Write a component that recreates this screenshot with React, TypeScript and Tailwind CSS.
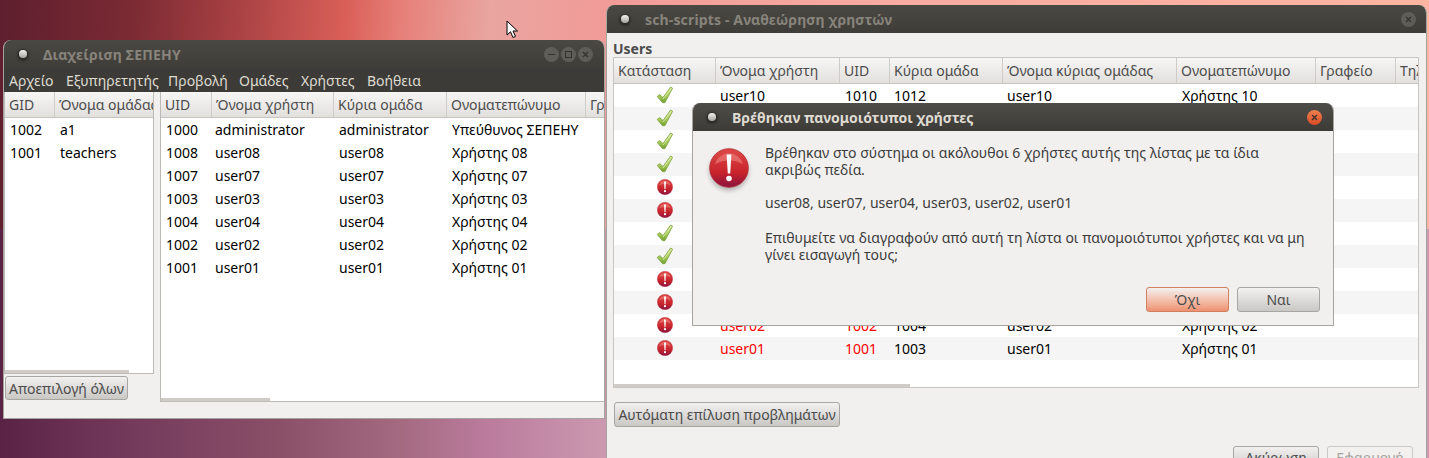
import React from "react";

const font = "font-['Noto_Sans','Open_Sans',sans-serif]";

function Check() {
  return (
    <svg width="18" height="18" viewBox="0 0 18 18">
      <defs>
        <linearGradient id="chk" x1="0" y1="0" x2="0" y2="1">
          <stop offset="0" stopColor="#dcec9a" />
          <stop offset="0.6" stopColor="#a5c959" />
          <stop offset="1" stopColor="#6f9e2e" />
        </linearGradient>
      </defs>
      <path d="M1.2 10.4 L3.8 8.6 L7 11.6 L14.6 1 L16.6 2.2 L9 16.6 L6.6 16.8 Z" fill="url(#chk)" stroke="#7aa13c" strokeWidth="0.8" strokeLinejoin="round" />
      <path d="M7 13 L14.6 3" stroke="#e9f4bd" strokeWidth="0.7" fill="none" />
    </svg>
  );
}

function Err({ size = 16 }: { size?: number }) {
  return (
    <svg width={size} height={size} viewBox="0 0 40 40">
      <defs>
        <linearGradient id="errg" x1="0" y1="0" x2="0" y2="1">
          <stop offset="0" stopColor="#dd4a48" />
          <stop offset="0.62" stopColor="#c8232b" />
          <stop offset="1" stopColor="#8a1340" />
        </linearGradient>
      </defs>
      <circle cx="20" cy="20" r="19.3" fill="url(#errg)" stroke="#b22a35" strokeWidth="0.8" />
      <path d="M6 16 A14.5 14.5 0 0 1 34 16 A30 30 0 0 0 6 16 Z" fill="#ef8a84" opacity="0.55" />
      <path d="M17.6 6.5 H22.4 L21.2 25.5 H18.8 Z" fill="#fff" />
      <circle cx="20" cy="30.5" r="2.8" fill="#fff" />
    </svg>
  );
}

function Head({ cols }: { cols: [string, number][] }) {
  return (
    <div className="flex h-[26px] shrink-0 overflow-hidden border-b border-[#c8c5c0] bg-gradient-to-b from-[#f6f6f5] to-[#e2e0dd]">
      {cols.map(([t, w], i) => (
        <div key={i} style={{ width: w }} className="shrink-0 overflow-hidden whitespace-nowrap border-r border-[#cfccc8] pl-1 leading-[25px] text-[#4c4c4c]">
          {t}
        </div>
      ))}
    </div>
  );
}

function Row({ cells, widths, alt }: { cells: React.ReactNode[]; widths: number[]; alt?: boolean }) {
  return (
    <div className={`flex h-[23px] shrink-0 leading-[23px] text-black ${alt ? "bg-[#f5f5f5]" : "bg-white"}`}>
      {cells.map((c, i) => (
        <div key={i} style={{ width: widths[i] }} className="shrink-0 overflow-hidden whitespace-nowrap pl-[5px]">
          {c}
        </div>
      ))}
    </div>
  );
}

function Btn({ children, cls = "" }: { children: React.ReactNode; cls?: string }) {
  return (
    <div className={`flex items-center justify-center rounded-[3px] border border-[#a7a6a2] bg-gradient-to-b from-[#f2f1f0] to-[#c9c8c5] text-[#4c4c4c] ${cls}`}>
      {children}
    </div>
  );
}

function Dot({ children, cls = "bg-[#5f5d58]" }: { children?: React.ReactNode; cls?: string }) {
  return (
    <div className={`flex h-[15px] w-[15px] items-center justify-center rounded-full text-[#33322e] ${cls}`}>
      {children}
    </div>
  );
}

const X = () => (
  <svg width="7" height="7" viewBox="0 0 7 7"><path d="M1 1 L6 6 M6 1 L1 6" stroke="currentColor" strokeWidth="1.2" /></svg>
);

function TitleDot() {
  return <div className="h-[8px] w-[8px] rounded-full bg-gradient-to-b from-[#f4f3f0] to-[#a5a39c] shadow-[0_1px_2px_2px_rgba(20,20,18,0.45)]" />;
}

const groups: [string, string][] = [["1002", "a1"], ["1001", "teachers"]];
const users = [
  ["1000", "administrator", "administrator", "Υπεύθυνος ΣΕΠΕΗΥ"],
  ["1008", "user08", "user08", "Χρήστης 08"],
  ["1007", "user07", "user07", "Χρήστης 07"],
  ["1003", "user03", "user03", "Χρήστης 03"],
  ["1004", "user04", "user04", "Χρήστης 04"],
  ["1002", "user02", "user02", "Χρήστης 02"],
  ["1001", "user01", "user01", "Χρήστης 01"],
];
const menus: [string, number][] = [
  ["Αρχείο", 57], ["Εξυπηρετητής", 102], ["Προβολή", 71], ["Ομάδες", 62], ["Χρήστες", 66], ["Βοήθεια", 70],
];

const rw: number[] = [101, 125, 49, 113, 175, 139, 80, 23];
const rcols: [string, number][] = [
  ["Κατάσταση", 102], ["Όνομα χρήστη", 124], ["UID", 50], ["Κύρια ομάδα", 113],
  ["Όνομα κύριας ομάδας", 174], ["Ονοματεπώνυμο", 139], ["Γραφείο", 80], ["Τηλ", 23],
];
const status = [1, 1, 1, 1, 0, 0, 1, 1, 0, 0, 0, 0];
const rowData: Record<number, string[]> = {
  0: ["user10", "1010", "1012", "user10", "Χρήστης 10"],
  10: ["user02", "1002", "1004", "user02", "Χρήστης 02"],
  11: ["user01", "1001", "1003", "user01", "Χρήστης 01"],
};

export default function App() {
  return (
    <div className={`relative flex h-[458px] w-[1429px] flex-col overflow-hidden text-[14px] ${font}`}>
      {/* wallpaper */}
      <div className="h-[229px] shrink-0 bg-[linear-gradient(94deg,#5e1f2e_0px,#7a2a33_130px,#a53f42_230px,#d95f58_345px,#e67f78_400px,#e9a5a0_490px,#f19b98_600px,#f8aca2_900px,#fbb5a0_1429px)]" />
      <div className="h-[229px] shrink-0 bg-[linear-gradient(90deg,#5a2346_0px,#743a5c_130px,#8a5068_280px,#a46a80_400px,#bb7c9e_490px,#cc9ab0_610px)]" />

      {/* Left window */}
      <div className="absolute left-[3px] top-[40px] flex h-[379px] w-[602px] flex-col overflow-hidden rounded-t-[8px] border-x border-b border-[#a5a39e] bg-[#f1f0ee]">
        <div className="flex h-[28px] shrink-0 items-center bg-gradient-to-b from-[#4a4843] to-[#3e3d38] pl-[15px] pr-[11px]">
          <TitleDot />
          <div className="ml-[16px] flex-1 text-[14px] font-bold tracking-[0.2px] text-[#87847b]">Διαχείριση ΣΕΠΕΗΥ</div>
          <div className="flex gap-[2px]">
            <Dot><div className="h-[1px] w-[7px] bg-[#33322e]" /></Dot>
            <Dot><div className="h-[7px] w-[7px] border border-[#33322e]" /></Dot>
            <Dot><X /></Dot>
          </div>
        </div>
        <div className="flex h-[24px] shrink-0 items-center bg-[#3c3b37] pl-[5px] text-[#dfdbd2]">
          {menus.map(([m, w]) => (
            <span key={m} style={{ width: w }} className="shrink-0 whitespace-nowrap">{m}</span>
          ))}
        </div>
        <div className="flex min-h-0 flex-1">
          <div className="flex w-[156px] shrink-0 flex-col">
            <div className="relative flex h-[282px] w-[150px] flex-col overflow-hidden border-x border-b border-[#bdbab5] bg-white">
              <Head cols={[["GID", 50], ["Όνομα ομάδας", 100]]} />
              {groups.map((g) => (
                <Row key={g[0]} cells={g} widths={[50, 100]} />
              ))}
              <div className="absolute bottom-0 left-0 h-[3px] w-[124px] bg-[#cfccc8]" />
            </div>
            <Btn cls="ml-[1px] mt-[2px] h-[24px] w-[123px]">Αποεπιλογή όλων</Btn>
          </div>
          <div className="relative flex h-[310px] flex-1 flex-col overflow-hidden border-b border-l border-[#bdbab5] bg-white">
            <Head cols={[["UID", 51], ["Όνομα χρήστη", 122], ["Κύρια ομάδα", 113], ["Ονοματεπώνυμο", 139], ["Γραφείο", 60]]} />
            {users.map((u) => (
              <Row key={u[1]} cells={u} widths={[49, 124, 113, 139]} />
            ))}
            <div className="absolute bottom-0 left-0 h-[3px] w-[109px] bg-[#cfccc8]" />
          </div>
        </div>
      </div>

      {/* Right window */}
      <div className="absolute left-[606px] top-[5px] flex h-[460px] w-[821px] flex-col overflow-hidden rounded-t-[8px] border-x border-[#a5a39e] bg-[#f1f0ee]">
        <div className="flex h-[28px] shrink-0 items-center bg-gradient-to-b from-[#4a4843] to-[#3e3d38] pl-[14px] pr-[10px]">
          <TitleDot />
          <div className="ml-[16px] flex-1 text-[14px] font-bold tracking-[0.15px] text-[#87847b]">sch-scripts - Αναθεώρηση χρηστών</div>
          <Dot><X /></Dot>
        </div>
        <div className="flex flex-1 flex-col pl-[6px] pr-[7px]">
          <div className="mt-[7px] h-[17px] text-[14px] font-bold leading-[17px] text-[#4c4c4c]">Users</div>
          <div className="relative flex h-[331px] w-[806px] flex-col overflow-hidden border border-[#c8c5c0] bg-white">
            <Head cols={rcols} />
            {status.map((s, i) => {
              const d = rowData[i];
              const isErr = !s;
              return (
                <Row
                  key={i}
                  alt={i % 2 === 1}
                  widths={rw}
                  cells={[
                    <div key="a" className="flex h-[21px] items-center justify-center pr-[5px]">{s ? <Check /> : <Err />}</div>,
                    d ? <span className={isErr ? "text-[#ff0000]" : ""}>{d[0]}</span> : null,
                    d ? <span className={isErr ? "text-[#ff0000]" : ""}>{d[1]}</span> : null,
                    d ? d[2] : null,
                    d ? d[3] : null,
                    d ? d[4] : null,
                    null,
                    null,
                  ]}
                />
              );
            })}
            <div className="absolute bottom-0 left-0 h-[3px] w-[296px] bg-[#cfccc8]" />
          </div>
          <Btn cls="ml-[1px] mt-[14px] h-[25px] w-[226px]">Αυτόματη επίλυση προβλημάτων</Btn>
          <div className="mr-[6px] mt-[19px] flex justify-end gap-[8px]">
            <Btn cls="h-[25px] w-[86px] pb-[3px]">Ακύρωση</Btn>
            <Btn cls="h-[25px] w-[86px] border-[#c9c8c4] from-[#f1f0ee] to-[#f1f0ee] pb-[3px] text-[#a5a39e]">Εφαρμογή</Btn>
          </div>
        </div>
      </div>

      {/* Dialog */}
      <div className="absolute left-[692px] top-[103px] flex h-[223px] w-[642px] flex-col overflow-hidden rounded-t-[8px] border-x border-b border-[#a5a39e] bg-[#f1f0ee]">
        <div className="flex h-[28px] shrink-0 items-center bg-gradient-to-b from-[#4f4d47] to-[#3c3b37] pl-[15px] pr-[11px]">
          <TitleDot />
          <div className="ml-[16px] flex-1 text-[14px] font-bold text-[#dfdbd2]">Βρέθηκαν πανομοιότυποι χρήστες</div>
          <Dot cls="bg-gradient-to-b from-[#f08050] to-[#d84a20]"><X /></Dot>
        </div>
        <div className="flex flex-1 flex-col">
          <div className="flex h-[156px]">
            <div className="ml-[16px] mt-[17px] h-[40px] drop-shadow-[0_3px_2px_rgba(0,0,0,0.25)]"><Err size={40} /></div>
            <div className="ml-[16px] mt-[13px] w-[550px] leading-[17px] text-[#3c3c3c]">
              <p>Βρέθηκαν στο σύστημα οι ακόλουθοι 6 χρήστες αυτής της λίστας με τα ίδια ακριβώς πεδία.</p>
              <p className="mt-[16px]">user08, user07, user04, user03, user02, user01</p>
              <p className="mt-[18px]">Επιθυμείτε να διαγραφούν από αυτή τη λίστα οι πανομοιότυποι χρήστες και να μη γίνει εισαγωγή τους;</p>
            </div>
          </div>
          <div className="mr-[13px] flex justify-end gap-[8px]">
            <Btn cls="h-[25px] w-[83px] border-[#d0805f] from-[#f2a283] to-[#ee9170]">Όχι</Btn>
            <Btn cls="h-[25px] w-[83px]">Ναι</Btn>
          </div>
        </div>
      </div>

      {/* Cursor */}
      <svg className="absolute left-[506px] top-[20px]" width="13" height="20" viewBox="0 0 13 20">
        <path d="M1 1 V15 L4.5 11.8 L7 17.5 L9.5 16.4 L7 11 H11.5 Z" fill="#fff" stroke="#000" strokeWidth="1" />
      </svg>
    </div>
  );
}
